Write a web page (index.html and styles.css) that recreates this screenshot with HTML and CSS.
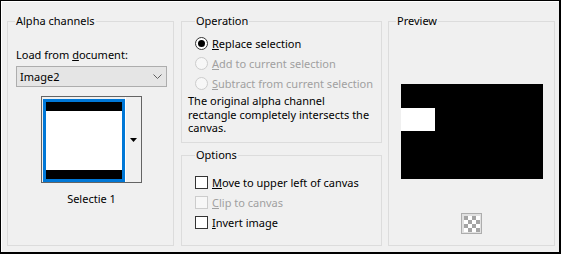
FILE: index.html
```html
<!DOCTYPE html>
<html>
<head>
<meta charset="utf-8">
<title>Alpha channels</title>
<link rel="stylesheet" href="styles.css">
</head>
<body>
<div class="dialog">
  <fieldset class="group group-alpha">
    <legend>Alpha channels</legend>
    <div class="alpha-body">
      <div class="label">Load from <u>d</u>ocument:</div>
      <div class="combo">
        <span>Image2</span>
        <svg class="chev" width="9" height="5" viewBox="0 0 9 5"><path d="M0.5 0.5 L4.5 4.5 L8.5 0.5" fill="none" stroke="#606060" stroke-width="1"/></svg>
      </div>
      <div class="thumb-frame">
        <div class="thumb"><div class="bar"></div><div class="bar"></div></div>
        <div class="thumb-btn"><svg width="7" height="4" viewBox="0 0 7 4"><path d="M0 0 H7 L3.5 4 Z" fill="#000"/></svg></div>
      </div>
      <div class="caption">Selectie 1</div>
    </div>
  </fieldset>

  <div class="col-mid">
    <fieldset class="group group-op">
      <legend>Operation</legend>
      <div class="opt-list">
        <div class="opt"><span class="radio checked"><span class="dot"></span></span><span><u>R</u>eplace selection</span></div>
        <div class="opt disabled"><span class="radio"></span><span><u>A</u>dd to current selection</span></div>
        <div class="opt disabled"><span class="radio"></span><span><u>S</u>ubtract from current selection</span></div>
      </div>
      <div class="desc">The original alpha channel rectangle completely intersects the canvas.</div>
    </fieldset>
    <fieldset class="group group-options">
      <legend>Options</legend>
      <div class="opt-list opt-list-checks">
        <div class="opt"><span class="check"></span><span><u>M</u>ove to upper left of canvas</span></div>
        <div class="opt disabled"><span class="check"></span><span><u>C</u>lip to canvas</span></div>
        <div class="opt"><span class="check"></span><span><u>I</u>nvert image</span></div>
      </div>
    </fieldset>
  </div>

  <fieldset class="group group-preview">
    <legend>Preview</legend>
    <div class="preview-body">
      <div class="canvas"><div class="canvas-sel"></div></div>
      <div class="chk-btn">
        <svg width="16" height="16" viewBox="0 0 16 16">
          <rect width="16" height="16" fill="#ffffff"/>
          <g fill="#a4a4a4">
            <rect x="0" y="0" width="4" height="4"/><rect x="8" y="0" width="4" height="4"/>
            <rect x="4" y="4" width="4" height="4"/><rect x="12" y="4" width="4" height="4"/>
            <rect x="0" y="8" width="4" height="4"/><rect x="8" y="8" width="4" height="4"/>
            <rect x="4" y="12" width="4" height="4"/><rect x="12" y="12" width="4" height="4"/>
          </g>
        </svg>
      </div>
    </div>
  </fieldset>
</div>
</body>
</html>
```

FILE: styles.css
```css
* { box-sizing: border-box; }
html, body { margin: 0; padding: 0; }
body {
  width: 561px;
  height: 254px;
  font-family: "Noto Sans", "Open Sans", sans-serif;
  font-size: 11px;
  color: #000;
  background: #f0f0f0;
}
.dialog {
  width: 561px;
  height: 254px;
  border-style: solid;
  border-color: #000;
  border-width: 1px 2px 2px 1px;
  background: #f0f0f0;
  box-shadow: inset 1px 1px 0 #fff;
  padding: 12px 0 0 6px;
  display: flex;
  align-items: flex-start;
}
.group {
  margin: 0;
  padding: 0;
  border: 1px solid #dcdcdc;
  min-width: 0;
}
.group legend {
  padding: 0 1px 2px;
  margin-left: 7px;
  line-height: 15px;
}

/* Alpha channels */
.group-alpha { width: 167px; height: 233px; }
.alpha-body {
  display: flex;
  flex-direction: column;
  padding: 0 6px 0 8px;
}
.label { margin-top: 17px; line-height: 15px; }
.combo {
  margin-top: 4px;
  height: 21px;
  border: 1px solid #adadad;
  background: #e5e5e5;
  display: flex;
  align-items: center;
  justify-content: space-between;
  padding: 0 4px 0 3px;
  line-height: 15px;
}
.chev { display: block; }
.thumb-frame {
  margin: 9px auto 0;
  width: 101px;
  height: 87px;
  display: flex;
  border: 1px solid #646464;
  background: #f0f0f0;
}
.thumb {
  margin: 2px 0 0 1px;
  width: 82px;
  height: 83px;
  border: 3px solid #0078d7;
  background: #fff;
  display: flex;
  flex-direction: column;
  justify-content: space-between;
}
.bar { height: 9px; background: #000; }
.thumb-btn {
  flex: 1;
  display: flex;
  align-items: center;
  justify-content: center;
  border-left: 1px solid #fff;
}
.thumb-btn svg { display: block; }
.caption { margin-top: 8px; line-height: 15px; text-align: center; }

/* middle column */
.col-mid {
  margin-left: 7px;
  width: 201px;
  display: flex;
  flex-direction: column;
  gap: 4px;
}
.group-op { height: 130px; padding: 0 6px; }
.group-options { height: 99px; padding: 0 6px; }
.opt-list { margin: 3px 0 0 7px; }
.opt-list-checks { margin-top: 8px; }
.opt {
  height: 20px;
  display: flex;
  align-items: center;
  gap: 4px;
  line-height: 15px;
}
.opt.disabled { color: #a0a0a0; }
.radio {
  width: 13px;
  height: 13px;
  border-radius: 50%;
  border: 1px solid #333;
  background: #fff;
  display: flex;
  align-items: center;
  justify-content: center;
  flex: none;
}
.radio .dot { width: 7px; height: 7px; border-radius: 50%; background: #000; }
.opt.disabled .radio { border-color: #cccccc; background: #f7f7f7; }
.check {
  width: 13px;
  height: 13px;
  border: 1px solid #333;
  background: #fff;
  flex: none;
}
.opt.disabled .check { border-color: #cccccc; background: #f7f7f7; }
.desc { margin-top: 1px; line-height: 13.5px; }

/* Preview */
.group-preview { margin-left: 6px; width: 167px; height: 233px; }
.preview-body {
  display: flex;
  flex-direction: column;
  align-items: center;
}
.canvas {
  margin-top: 54px;
  width: 142px;
  height: 95px;
  background: #000;
  padding-top: 24px;
}
.canvas-sel { width: 34px; height: 23px; background: #fff; }
.chk-btn {
  margin-top: 34px;
  width: 21px;
  height: 21px;
  border: 1px solid #adadad;
  background: #e1e1e1;
  display: flex;
  align-items: center;
  justify-content: center;
}
.chk-btn svg { display: block; }
```
